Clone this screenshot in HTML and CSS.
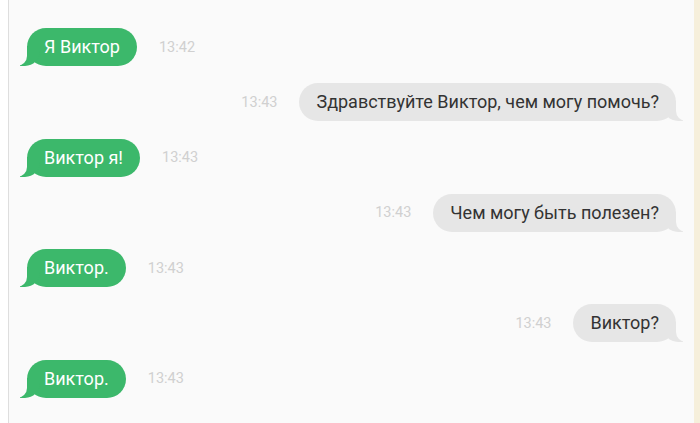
FILE: index.html
```html
<html lang="ru">

<head>
    <meta charset="UTF-8">
    <meta name="viewport" content="width=device-width, initial-scale=1.0">
    <title>Чат</title>

    <link rel="stylesheet" href="styles.css">
</head>

<body>

    <div class="chat">

        <div class="row in">
            <div class="bubble"><span>Я Виктор</span></div>
            <div class="time">13:42</div>
        </div>

        <div class="row out">
            <div class="time">13:43</div>
            <div class="bubble"><span>Здравствуйте Виктор, чем могу помочь?</span></div>
        </div>

        <div class="row in">
            <div class="bubble"><span>Виктор я!</span></div>
            <div class="time">13:43</div>
        </div>

        <div class="row out">
            <div class="time">13:43</div>
            <div class="bubble"><span>Чем могу быть полезен?</span></div>
        </div>

        <div class="row in">
            <div class="bubble"><span>Виктор.</span></div>
            <div class="time">13:43</div>
        </div>

        <div class="row out">
            <div class="time">13:43</div>
            <div class="bubble"><span>Виктор?</span></div>
        </div>

        <div class="row in">
            <div class="bubble"><span>Виктор.</span></div>
            <div class="time">13:43</div>
        </div>

    </div>

</body>

</html>
```

FILE: styles.css
```css
body {
    background: rgb(255, 255, 255);
    margin: 0px;
    padding: 0px;
    font-family: Roboto, "Liberation Sans", sans-serif;
}
.chat {
    margin-left: 8px;
    height: 423px;
    box-sizing: border-box;
    background: #fafafa;
    border-left: 1px solid #dedede;
    border-right: 6px solid #f6efdb;
    padding: 28px 18px 0 18px;
    display: flex;
    flex-direction: column;
    gap: 17.3px;
}
.row {
    display: flex;
    align-items: center;
    gap: 22px;
}
.out {
    justify-content: flex-end;
}
.bubble {
    position: relative;
    z-index: 0;
    height: 38px;
    box-sizing: border-box;
    padding: 0 17px;
    border-radius: 19px;
    font-size: 18px;
    line-height: 38px;
    white-space: nowrap;
}
.in .bubble {
    background: #3cb86b;
    color: #ffffff;
}
.out .bubble {
    background: #e6e6e6;
    color: #333333;
}
.bubble::before,
.bubble::after {
    content: "";
    position: absolute;
    z-index: -1;
    bottom: 0;
    height: 20px;
}
.in .bubble::before {
    left: -7px;
    width: 20px;
    background: #3cb86b;
    border-bottom-right-radius: 15px;
}
.in .bubble::after {
    left: -10px;
    width: 10px;
    background: #fafafa;
    border-bottom-right-radius: 10px;
}
.out .bubble::before {
    right: -7px;
    width: 20px;
    background: #e6e6e6;
    border-bottom-left-radius: 15px;
}
.out .bubble::after {
    right: -10px;
    width: 10px;
    background: #fafafa;
    border-bottom-left-radius: 10px;
}
.time {
    font-size: 14.5px;
    color: #d0d0d0;
}
```
